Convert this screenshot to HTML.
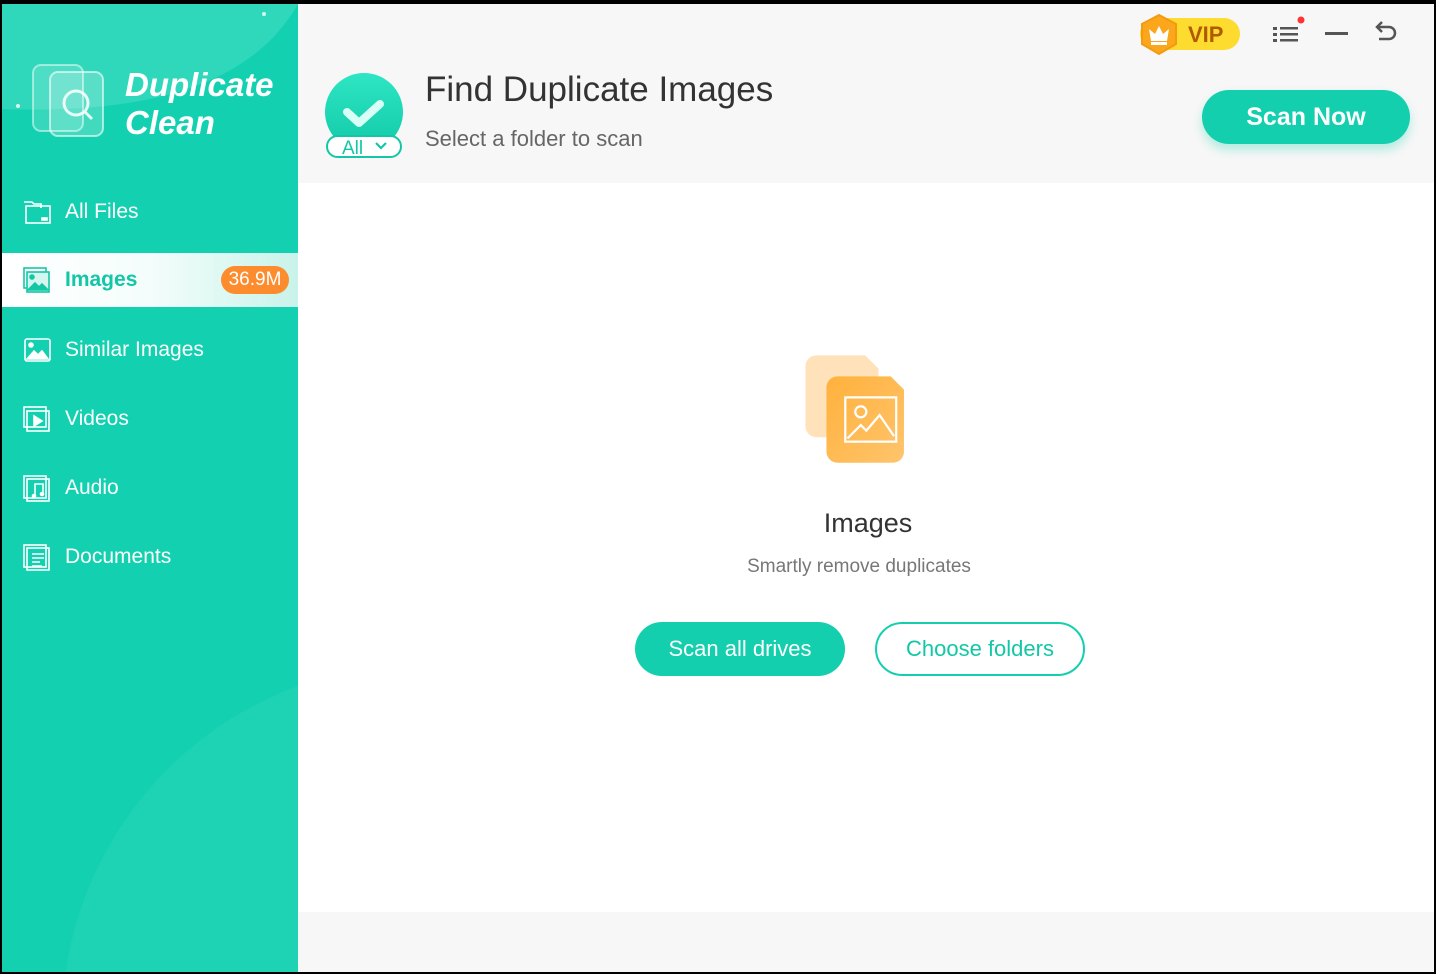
<!DOCTYPE html>
<html><head><meta charset="utf-8"><style>
*{margin:0;padding:0;box-sizing:border-box}
html,body{width:1436px;height:974px;overflow:hidden}
body{background:#000;font-family:"Liberation Sans",sans-serif;position:relative}
.side{position:absolute;left:2px;top:4px;width:296px;height:968px;background:#13d1b0;overflow:hidden}
.main{position:absolute;left:298px;top:4px;width:1136px;height:968px;background:#fff;overflow:hidden}
.hdr{position:absolute;left:0;top:0;width:1136px;height:179px;background:#f7f7f7}
.ftr{position:absolute;left:0;top:908px;width:1136px;height:60px;background:#f7f7f7}
.nav{position:absolute;left:0;width:296px;height:54px;color:#fff;font-size:21px;display:flex;align-items:center}
.nav svg{position:absolute;left:20px}
.nav span{position:absolute;left:63px}
.abs{position:absolute}
</style></head><body>
<div class="side">
 <svg class="abs" style="left:0;top:0" width="296" height="968">
  <path d="M0 0 H296 V0 C250 80 150 110 0 105 Z" fill="#3ddcc0" opacity=".7"/>
  <circle cx="420" cy="1020" r="360" fill="#30d8bb" opacity=".4"/>
  <circle cx="16" cy="102" r="2" fill="#fff" opacity=".8"/>
  <circle cx="262" cy="10" r="2" fill="#fff" opacity=".8"/>
 </svg>
 <svg class="abs" style="left:28px;top:58px" width="78" height="76" viewBox="0 0 78 76">
  <rect x="3" y="3" width="50" height="66" rx="8" fill="#fff" fill-opacity=".15" stroke="#fff" stroke-opacity=".5" stroke-width="2"/>
  <rect x="20" y="10" width="53" height="64" rx="8" fill="#fff" fill-opacity=".2" stroke="#fff" stroke-opacity=".6" stroke-width="2"/>
  <circle cx="46" cy="41" r="12" fill="none" stroke="#fff" stroke-width="3" opacity=".85"/>
  <path d="M55 50 L62 57" stroke="#fff" stroke-width="3" opacity=".85"/>
 </svg>
 <div class="abs" style="left:123px;top:62px;color:#fff;font-size:33px;font-weight:bold;font-style:italic;line-height:38px">Duplicate<br>Clean</div>
 <div class="nav" style="top:181px"><svg width="30" height="30" viewBox="0 0 30 30" fill="none" stroke="#fff" stroke-width="1.6"><path d="M2 5h8l2 2h7v4"/><rect x="4" y="9" width="24" height="17"/><rect x="20" y="21" width="5" height="2" fill="#fff"/></svg><span>All Files</span></div>
 <div class="nav" style="top:249px;height:54px;background:linear-gradient(90deg,#fff 0%,#f4fdfb 50%,#c8f3ea 100%)"><svg width="30" height="30" viewBox="0 0 30 30" fill="none" stroke="#13c7a6" stroke-width="1.6"><rect x="2" y="3" width="22" height="20"/><rect x="5" y="7" width="22" height="20" fill="#d5f6ef"/><circle cx="10" cy="12" r="2" fill="#13c7a6"/><path d="M6 25l7-7 4 4 3-3 6 6z" fill="#13c7a6"/></svg><span style="color:#13c7a6;font-weight:bold">Images</span><div class="abs" style="left:219px;top:13px;width:68px;height:28px;border-radius:14px;background:#fd8c2e;color:#fff;font-size:19px;text-align:center;line-height:28px">36.9M</div></div>
 <div class="nav" style="top:319px"><svg width="30" height="30" viewBox="0 0 30 30" fill="none" stroke="#fff" stroke-width="1.6"><rect x="3" y="4" width="25" height="22" rx="2"/><circle cx="9" cy="10" r="2" fill="#fff"/><path d="M5 24l7-8 4 4 4-4 6 8z" fill="#fff"/></svg><span>Similar Images</span></div>
 <div class="nav" style="top:388px"><svg width="30" height="30" viewBox="0 0 30 30" fill="none" stroke="#fff" stroke-width="1.6"><rect x="2" y="3" width="22" height="20"/><rect x="5" y="7" width="22" height="20"/><path d="M12 12v10l8-5z" fill="#fff"/></svg><span>Videos</span></div>
 <div class="nav" style="top:457px"><svg width="30" height="30" viewBox="0 0 30 30" fill="none" stroke="#fff" stroke-width="1.6"><rect x="2" y="3" width="22" height="22"/><rect x="5" y="6" width="22" height="22"/><path d="M13 23V11h8v10"/><circle cx="12" cy="23" r="1.5" fill="#fff"/><circle cx="20" cy="21" r="1.5" fill="#fff"/></svg><span>Audio</span></div>
 <div class="nav" style="top:526px"><svg width="30" height="30" viewBox="0 0 30 30" fill="none" stroke="#fff" stroke-width="1.6"><rect x="2" y="3" width="22" height="22"/><rect x="5" y="6" width="22" height="22"/><path d="M10 12h12M10 16h12M10 20h8M10 24h10"/></svg><span>Documents</span></div>
</div>
<div class="main">
 <div class="hdr"></div>
 <svg class="abs" style="left:26px;top:68px" width="80" height="88" viewBox="0 0 80 88">
  <defs><linearGradient id="g" x1="0" y1="0" x2="0" y2="1"><stop offset="0" stop-color="#2ee6c3"/><stop offset="1" stop-color="#12c9a8"/></linearGradient></defs>
  <circle cx="40" cy="40" r="39" fill="url(#g)"/>
  <path d="M23 40l12 11 21-19" fill="none" stroke="#d8fff6" stroke-width="8" stroke-linecap="round" stroke-linejoin="round"/>
  <rect x="3" y="64" width="74" height="21" rx="10.5" fill="#fff" stroke="#13c7a6" stroke-width="2"/>
  <text x="18" y="82" font-size="19" fill="#13c7a6" font-family="Liberation Sans">All</text>
  <path d="M52 71l5 5 5-5" fill="none" stroke="#13c7a6" stroke-width="2.2"/>
 </svg>
 <div class="abs" style="left:127px;top:66px;font-size:35px;color:#333">Find Duplicate Images</div>
 <div class="abs" style="left:127px;top:122px;font-size:22px;color:#666">Select a folder to scan</div>
 <div class="abs" style="left:842px;top:14px;width:100px;height:32px;border-radius:16px;background:#fedb2f"></div>
 <svg class="abs" style="left:840px;top:9px" width="42" height="44" viewBox="0 0 42 44"><path d="M21 2l17 9v20l-17 10-17-10V11z" fill="#fca61c" stroke="#f49a10" stroke-width="2"/><path d="M11 16l6 5 4-8 4 8 6-5-2 12H13z" fill="#fff"/><rect x="13" y="29" width="16" height="3" fill="#fff"/></svg>
 <div class="abs" style="left:890px;top:18px;font-size:22px;font-weight:bold;color:#b05a00">VIP</div>
 <svg class="abs" style="left:972px;top:12px" width="36" height="30"><g fill="#555"><rect x="3" y="11" width="4" height="3"/><rect x="3" y="17" width="4" height="3"/><rect x="3" y="23" width="4" height="3"/><rect x="10" y="11" width="18" height="2.5"/><rect x="10" y="17" width="18" height="2.5"/><rect x="10" y="23" width="18" height="2.5"/></g><circle cx="31" cy="4" r="3.5" fill="#f33"/></svg>
 <div class="abs" style="left:1027px;top:28px;width:23px;height:3px;background:#555"></div>
 <svg class="abs" style="left:1076px;top:14px" width="26" height="28" viewBox="0 0 26 28" fill="none" stroke="#555" stroke-width="2.5"><path d="M8 4L3 9l5 5"/><path d="M3 9h12a6 6 0 0 1 0 12H5"/></svg>
 <div class="abs" style="left:904px;top:86px;width:208px;height:54px;border-radius:27px;background:#13cfad;box-shadow:0 6px 10px rgba(19,207,173,.3);color:#fff;font-size:25px;font-weight:bold;text-align:center;line-height:54px">Scan Now</div>
 <svg class="abs" style="left:503px;top:348px" width="124" height="124" viewBox="0 0 112 112">
  <defs><linearGradient id="o" x1="0" y1="0" x2="1" y2="1"><stop offset="0" stop-color="#ffb13c"/><stop offset="1" stop-color="#ffc46c"/></linearGradient></defs>
  <path d="M14 3h44l12 12v52a10 10 0 0 1-10 10H14A10 10 0 0 1 4 67V13A10 10 0 0 1 14 3z" fill="#ffd7a3" opacity=".75"/>
  <path d="M33 22h48l12 12v56a10 10 0 0 1-10 10H33a10 10 0 0 1-10-10V32a10 10 0 0 1 10-10z" fill="url(#o)"/>
  <rect x="40" y="41" width="46" height="40" fill="none" stroke="#fff" stroke-width="2"/>
  <circle cx="54" cy="54" r="5" fill="none" stroke="#fff" stroke-width="2"/>
  <path d="M42 78l12-12 5 5 12-14 13 19" fill="none" stroke="#fff" stroke-width="2"/>
 </svg>
 <div class="abs" style="left:0;width:1136px;top:504px;text-align:center;font-size:27px;color:#333;padding-left:4px">Images</div>
 <div class="abs" style="left:0;width:1122px;top:552px;text-align:center;font-size:19px;color:#777">Smartly remove duplicates</div>
 <div class="abs" style="left:337px;top:618px;width:210px;height:54px;border-radius:27px;background:#13cfad;color:#fff;font-size:22px;text-align:center;line-height:54px">Scan all drives</div>
 <div class="abs" style="left:577px;top:618px;width:210px;height:54px;border-radius:27px;border:2px solid #13cfad;color:#13c7a6;font-size:22px;text-align:center;line-height:50px">Choose folders</div>
 <div class="ftr"></div>
</div>
</body></html>
